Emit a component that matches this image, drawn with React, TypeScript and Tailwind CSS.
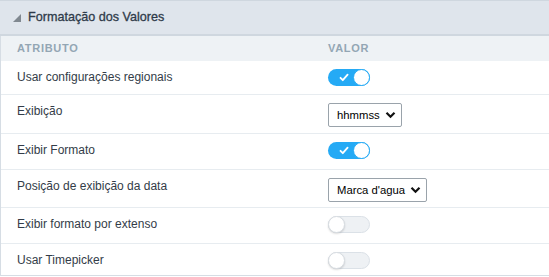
import React from "react";

function Toggle({ on }: { on: boolean }) {
  if (on) {
    return (
      <div className="relative h-[17px] w-[42px] rounded-full bg-[#25aaf5]">
        <svg className="absolute left-[11px] top-[4px]" width="10" height="9" viewBox="0 0 10 9">
          <path d="M1.5 4.8 L3.8 7.2 L8.6 1.6" fill="none" stroke="white" strokeWidth="1.8" strokeLinecap="round" strokeLinejoin="round" />
        </svg>
        <div className="absolute right-0 top-0 h-[17px] w-[17px] rounded-full border border-[#25aaf5] bg-white" />
      </div>
    );
  }
  return (
    <div className="relative h-[17px] w-[42px] rounded-full border border-[#dbe1e7] bg-[#eef1f4]">
      <div className="absolute left-[-1px] top-[-1px] h-[17px] w-[17px] rounded-full border border-[#d7dce1] bg-white shadow-[0_1px_2px_rgba(0,0,0,0.15)]" />
    </div>
  );
}

function Select({ label, width }: { label: string; width: string }) {
  return (
    <div className={`flex h-[24px] items-center justify-between whitespace-nowrap rounded-[2px] border border-[#9aa3ab] bg-white pl-[8px] pr-[5px] text-[11.3px] text-black ${width}`}>
      <span>{label}</span>
      <svg width="11" height="8" viewBox="0 0 11 8" className="shrink-0">
        <path d="M1.5 1.8 L5.5 5.8 L9.5 1.8" fill="none" stroke="#111" strokeWidth="2.2" />
      </svg>
    </div>
  );
}

type Row = { label: string; kind: "on" | "off" | "select"; value?: string; width?: string; h: string };

const rows: Row[] = [
  { label: "Usar configurações regionais", kind: "on", h: "h-[34px]" },
  { label: "Exibição", kind: "select", value: "hhmmss", width: "w-[74px]", h: "h-[39px]" },
  { label: "Exibir Formato", kind: "on", h: "h-[36px]" },
  { label: "Posição de exibição da data", kind: "select", value: "Marca d'agua", width: "w-[99px]", h: "h-[38px]" },
  { label: "Exibir formato por extenso", kind: "off", h: "h-[36px]" },
  { label: "Usar Timepicker", kind: "off", h: "h-[31px]" },
];

export default function App() {
  return (
    <div className="h-[277px] w-[549px] bg-white" style={{ fontFamily: '"Liberation Sans", Arial, sans-serif' }}>
      <div className="flex h-[36px] items-center border-t border-b-2 border-t-[#cfd7df] border-b-[#cfd7df] bg-[#dfe5ec] pl-[13px]">
        <svg width="8" height="8" viewBox="0 0 8 8" className="mr-[7px] mt-[1px]">
          <path d="M8 0 L8 8 L0 8 Z" fill="#808890" />
        </svg>
        <span className="text-[12.6px] text-[#2f3b4a] [-webkit-text-stroke:0.3px_#2f3b4a]">Formatação dos Valores</span>
      </div>
      <div className="border-b border-l border-[#d6dde4]">
        <div className="grid h-[25px] grid-cols-[311px_1fr] items-center bg-[#eef2f5] text-[11px] font-bold tracking-[0.7px] text-[#93a6b4]">
          <div className="pl-[16px]">ATRIBUTO</div>
          <div className="pl-[16px]">VALOR</div>
        </div>
        {rows.map((r, i) => (
          <div
            key={i}
            className={`grid grid-cols-[311px_1fr] ${r.h} ${i < rows.length - 1 ? "border-b border-[#e7ecf0]" : ""}`}
          >
            <div className="pl-[16px] pt-[8px] text-[12px] leading-[16px] text-[#333c48]">{r.label}</div>
            <div className="pl-[16px] pt-[8px]">
              {r.kind === "on" && <Toggle on />}
              {r.kind === "off" && <Toggle on={false} />}
              {r.kind === "select" && <Select label={r.value!} width={r.width!} />}
            </div>
          </div>
        ))}
      </div>
    </div>
  );
}
